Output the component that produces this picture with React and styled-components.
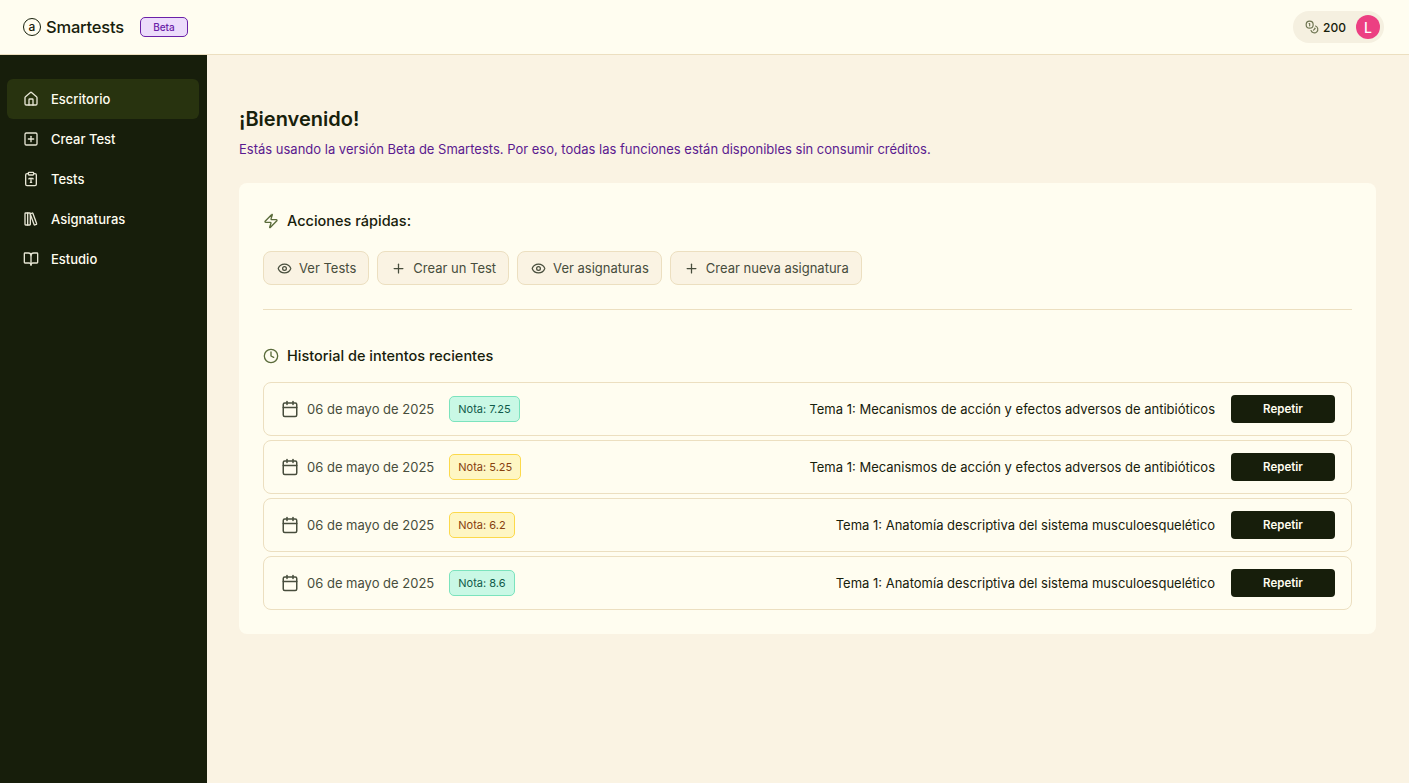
import React from 'react';
import styled, { createGlobalStyle } from 'styled-components';
import { House, SquarePlus, ClipboardType, LibraryBig, BookOpen, Zap, Eye, Plus, Clock, Calendar, Coins } from 'lucide-react';

const Global = createGlobalStyle`
  html, body { margin: 0; padding: 0; height: 100%; }
  body { font-family: Inter, "Noto Sans", sans-serif; background: #faf3e3; color: #17200b; overflow: hidden; }
  * { box-sizing: border-box; }
`;
const Page = styled.div`display: flex; flex-direction: column; height: 783px;`;
const Header = styled.header`
  height: 55px; flex: none; display: flex; align-items: center; justify-content: space-between;
  padding: 0 25px 0 23px; background: #fffdf0; border-bottom: 1px solid #ecdfc0;
`;
const Brand = styled.div`display: flex; align-items: center;`;
const LogoMark = styled.span`
  width: 18px; height: 18px; border: 1.5px solid #17200b; border-radius: 50%; display: flex; align-items: center; justify-content: center;
  font-size: 12px; line-height: 1; padding-bottom: 1px; font-weight: 500;
`;
const BrandName = styled.span`font-size: 16.5px; font-weight: 500; margin-left: 5px; letter-spacing: -0.2px;`;
const BetaTag = styled.span`
  margin-left: 16px; width: 48px; height: 20px; border: 1px solid #6b21a8; border-radius: 5px; background: #ecdcfb;
  color: #6b21a8; font-size: 10px; font-weight: 500; display: flex; align-items: center; justify-content: center;
`;
const Account = styled.div`
  height: 32px; border-radius: 16px; background: #f5f0e0; display: flex; align-items: center; padding: 0 4px 0 12px; gap: 4px;
  font-size: 12px; font-weight: 500;
`;
const Avatar = styled.span`
  width: 24px; height: 24px; border-radius: 50%; background: #ec3f82; color: #fff; margin-left: 6px;
  display: flex; align-items: center; justify-content: center; font-size: 14px;
`;
const Body = styled.div`flex: 1; display: flex; min-height: 0;`;
const Sidebar = styled.nav`
  width: 207px; flex: none; background: #171e0b; padding: 24px 8px 0 7px; display: flex; flex-direction: column;
`;
const NavItem = styled.a`
  height: 40px; border-radius: 6px; display: flex; align-items: center; gap: 12px; padding-left: 16px;
  color: #fffdf0; font-size: 13px; font-weight: 500; background: ${p => p.$active ? '#28330f' : 'transparent'};
  svg { color: #e6e5d4; flex: none; }
`;
const Main = styled.main`flex: 1; padding: 50px 33px 0 32px;`;
const Title = styled.h1`margin: 0; font-size: 20px; line-height: 28px; font-weight: 600;`;
const Intro = styled.p`margin: 6px 0 0; font-size: 13px; line-height: 20px; color: #5b1a8f;`;
const Card = styled.section`margin-top: 24px; background: #fffdf0; border-radius: 8px; padding: 24px;`;
const SectionTitle = styled.h2`
  margin: 0; display: flex; align-items: center; gap: 8px; font-size: 14.5px; line-height: 28px; font-weight: 500;
  svg { color: #5a6b3a; flex: none; }
`;
const Actions = styled.div`display: flex; gap: 8px; margin-top: 16px;`;
const ActionButton = styled.button`
  height: 34px; padding: 0 12px 0 13px; border: 1px solid #ecdfc0; border-radius: 8px; background: #faf3e3; color: #474d3c;
  font: 400 13px Inter, sans-serif; display: flex; align-items: center; gap: 7px;
`;
const Divider = styled.hr`border: 0; border-top: 1px solid #ecdfc0; margin: 24px 0 32px;`;
const Attempts = styled.div`display: flex; flex-direction: column; gap: 4px; margin-top: 12px;`;
const Attempt = styled.div`
  height: 54px; border: 1px solid #ecdfc0; border-radius: 8px; display: flex; align-items: center; padding: 0 16px 0 17px;
`;
const DateText = styled.span`
  display: flex; align-items: center; gap: 8px; font-size: 13px; font-weight: 400; color: #474d3c;
  svg { color: #474d3c; }
`;
const Grade = styled.span`
  margin-left: 15px; height: 26px; padding: 0 8px; border-radius: 5px; display: flex; align-items: center; font-size: 11px; font-weight: 400;
  border: 1px solid ${p => p.$pass ? '#7be3bd' : '#fcd94a'};
  background: ${p => p.$pass ? '#c9f8e5' : '#fef6c3'};
  color: ${p => p.$pass ? '#0f5a4a' : '#86400f'};
`;
const TestName = styled.span`margin-left: auto; font-size: 13px; font-weight: 400; color: #17200b;`;
const Repeat = styled.button`
  margin-left: 16px; width: 104px; height: 28px; border: 0; border-radius: 4px; background: #171e0b; color: #fffdf0;
  font: 600 11.5px Inter, sans-serif;
`;

const nav = [[House, 'Escritorio', true], [SquarePlus, 'Crear Test'], [ClipboardType, 'Tests'], [LibraryBig, 'Asignaturas'], [BookOpen, 'Estudio']];
const actions = [[Eye, 'Ver Tests'], [Plus, 'Crear un Test'], [Eye, 'Ver asignaturas'], [Plus, 'Crear nueva asignatura']];
const T1 = 'Tema 1: Mecanismos de acción y efectos adversos de antibióticos';
const T2 = 'Tema 1: Anatomía descriptiva del sistema musculoesquelético';
const attempts = [['7.25', true, T1], ['5.25', false, T1], ['6.2', false, T2], ['8.6', true, T2]];

export default function App() {
  return (
    <Page>
      <Global />
      <Header>
        <Brand>
          <LogoMark>a</LogoMark>
          <BrandName>Smartests</BrandName>
          <BetaTag>Beta</BetaTag>
        </Brand>
        <Account>
          <Coins size={14} color="#6d7450" />
          200
          <Avatar>L</Avatar>
        </Account>
      </Header>
      <Body>
        <Sidebar>
          {nav.map(([I, label, active]) => (
            <NavItem key={label} $active={active}><I size={16} />{label}</NavItem>
          ))}
        </Sidebar>
        <Main>
          <Title>¡Bienvenido!</Title>
          <Intro>Estás usando la versión Beta de Smartests. Por eso, todas las funciones están disponibles sin consumir créditos.</Intro>
          <Card>
            <SectionTitle><Zap size={16} />Acciones rápidas:</SectionTitle>
            <Actions>
              {actions.map(([I, label]) => (
                <ActionButton key={label}><I size={15} />{label}</ActionButton>
              ))}
            </Actions>
            <Divider />
            <SectionTitle><Clock size={16} />Historial de intentos recientes</SectionTitle>
            <Attempts>
              {attempts.map(([n, pass, name], i) => (
                <Attempt key={i}>
                  <DateText><Calendar size={18} />06 de mayo de 2025</DateText>
                  <Grade $pass={pass}>Nota: {n}</Grade>
                  <TestName>{name}</TestName>
                  <Repeat>Repetir</Repeat>
                </Attempt>
              ))}
            </Attempts>
          </Card>
        </Main>
      </Body>
    </Page>
  );
}
